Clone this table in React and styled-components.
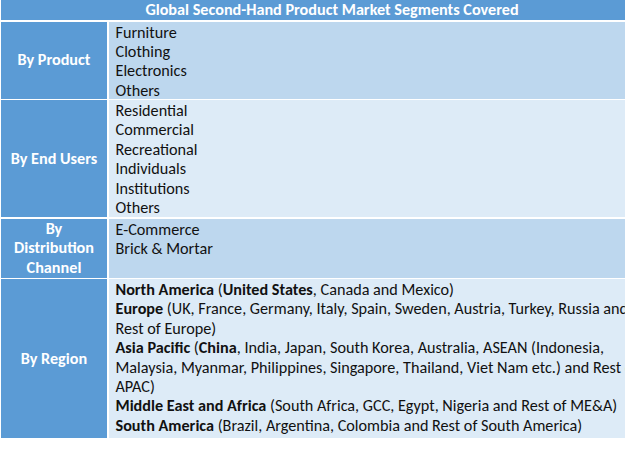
import React from 'react'
import styled, { createGlobalStyle } from 'styled-components'

const GlobalStyle = createGlobalStyle`
  html, body {
    margin: 0;
    padding: 0;
    background: #fff;
    overflow: hidden;
  }
  body {
    font-family: Carlito, Lato, "Open Sans", sans-serif;
    font-size: 16.2px;
    color: #111;
  }
`

const Table = styled.div`
  width: 662px;
  display: grid;
  grid-template-columns: 106px 1fr;
  gap: 1.5px;
  padding-left: 1px;
  background: #fff;
`

const Header = styled.div`
  grid-column: 1 / -1;
  height: 20px;
  line-height: 20px;
  background: #5b9bd5;
  color: #fff;
  font-weight: 700;
  text-align: center;
`

const Label = styled.div`
  background: #5b9bd5;
  color: #fff;
  font-weight: 700;
  display: flex;
  align-items: center;
  justify-content: center;
  text-align: center;
  line-height: 19.5px;
  height: ${p => p.h}px;
`

const Cell = styled.div`
  background: ${p => (p.light ? '#ddebf7' : '#bdd7ee')};
  padding: ${p => p.pad || 0}px 0 0 7px;
  line-height: 19.4px;
  height: ${p => p.h}px;
  box-sizing: border-box;
  white-space: nowrap;
`

const Line = styled.div``

const B = styled.b`
  font-weight: 700;
`

export default function App() {
  return (
    <>
      <GlobalStyle />
      <Table>
        <Header>Global Second-Hand Product Market Segments Covered</Header>

        <Label h={77}>By Product</Label>
        <Cell h={77} pad={1}>
          <Line>Furniture</Line>
          <Line>Clothing</Line>
          <Line>Electronics</Line>
          <Line>Others</Line>
        </Cell>

        <Label h={117}>By End Users</Label>
        <Cell light h={117} pad={1}>
          <Line>Residential</Line>
          <Line>Commercial</Line>
          <Line>Recreational</Line>
          <Line>Individuals</Line>
          <Line>Institutions</Line>
          <Line>Others</Line>
        </Cell>

        <Label h={59}>By<br />Distribution<br />Channel</Label>
        <Cell h={59} pad={1}>
          <Line>E-Commerce</Line>
          <Line>Brick &amp; Mortar</Line>
        </Cell>

        <Label h={159}>By Region</Label>
        <Cell light h={159} pad={1}>
          <Line><B>North America</B> (<B>United States</B>, Canada and Mexico)</Line>
          <Line><B>Europe</B> (UK, France, Germany, Italy, Spain, Sweden, Austria, Turkey, Russia and</Line>
          <Line>Rest of Europe)</Line>
          <Line><B>Asia Pacific</B> (<B>China</B>, India, Japan, South Korea, Australia, ASEAN (Indonesia,</Line>
          <Line>Malaysia, Myanmar, Philippines, Singapore, Thailand, Viet Nam etc.) and Rest of</Line>
          <Line>APAC)</Line>
          <Line><B>Middle East and Africa</B> (South Africa, GCC, Egypt, Nigeria and Rest of ME&amp;A)</Line>
          <Line><B>South America</B> (Brazil, Argentina, Colombia and Rest of South America)</Line>
        </Cell>
      </Table>
    </>
  )
}
